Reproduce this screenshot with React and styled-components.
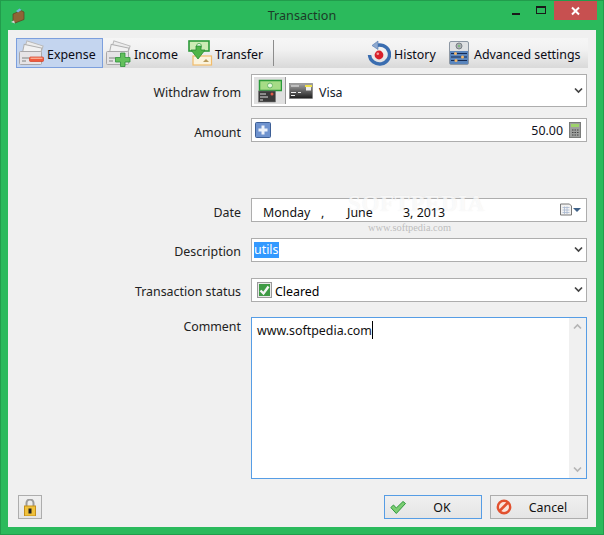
import React from 'react';
import styled, { createGlobalStyle } from 'styled-components';

const Global = createGlobalStyle`
  html, body { margin: 0; padding: 0; background: #2bb95c; }
  body { font-family: "Noto Sans", "Open Sans", "Liberation Sans", sans-serif; font-size: 12.4px; color: #000; }
`;

const Window = styled.div`
  width: 604px; height: 535px; box-sizing: border-box;
  background: #2bba5c; border: 1px solid #229c4c;
  display: flex; flex-direction: column; position: relative; overflow: hidden;
`;
const TitleBar = styled.div`
  height: 29px; flex: none; display: flex; align-items: center; justify-content: space-between; position: relative;
`;
const AppIcon = styled.div`display: flex; margin-left: 10px; margin-top: 1px;`;
const Title = styled.div`
  position: absolute; left: 0; right: 0; top: 6px; text-align: center; font-size: 12.6px; color: #1c3a28; line-height: 18px;
`;
const WinControls = styled.div`display: flex; align-items: flex-start; height: 29px; margin-top: 0; padding-right: 6px;`;
const WinBtn = styled.div`
  width: ${p => p.$w}px; height: 19px; display: flex; align-items: center; justify-content: center;
  background: ${p => p.$close ? '#c75050' : 'transparent'};
`;
const Client = styled.div`
  flex: 1; margin: 0 7px 7px; background: #f0f0f0; padding: 8px 8px 8px; display: flex; flex-direction: column; min-height: 0;
`;
const Toolbar = styled.div`
  height: 30px; flex: none; display: flex; align-items: stretch; background: linear-gradient(#f6f6f6, #f1f1f1 40%, #d9d9d9);
`;
const ToolBtn = styled.div`
  display: flex; align-items: center; gap: ${p => p.$gap ?? 3}px; box-sizing: border-box; width: ${p => p.$w}px; padding-left: ${p => p.$pl ?? 0}px;
  white-space: nowrap; color: #0a0a14;
  ${p => p.$active && 'background: #c4d5ef; border: 1px solid #7c9fdd;'}
`;
const ToolText = styled.span`padding-top: 2px;`;
const ToolSep = styled.div`width: 1px; margin: 2px 0 2px 2px; background: #8c8c8c;`;
const Spacer = styled.div`flex: 1;`;
const Form = styled.div`
  flex: 1; display: flex; flex-direction: column; margin-top: 6px; min-height: 0;
`;
const Row = styled.div`
  display: grid; grid-template-columns: 225px 336px; column-gap: 10px; flex: none; height: ${p => p.$h}px; margin-top: ${p => p.$mt ?? 0}px;
`;
const Label = styled.div`
  text-align: right; color: #222; line-height: 18px; padding-top: ${p => p.$pt ?? 5}px;
`;
const Field = styled.div`
  box-sizing: border-box; background: #fff; border: 1px solid #adadad;
  display: flex; align-items: center; position: relative; min-width: 0;
`;
const Chevron = styled.svg`position: absolute; right: 3px; top: 50%; margin-top: -4px;`;
const AccountTile = styled.div`
  width: 31px; height: 27px; margin-left: 2px; background: #e0e0e0; border-right: 1px solid #999; display: flex; align-items: center; justify-content: center;
`;
const CardWrap = styled.div`display: flex; margin-left: 3px;`;
const VisaText = styled.span`margin-left: 6px; color: #14202c; padding-top: 4px;`;
const PlusWrap = styled.div`display: flex; margin-left: 3px;`;
const AmountValue = styled.div`margin-left: auto; margin-right: 6px; color: #101020;`;
const CalcWrap = styled.div`display: flex; margin-right: 5px;`;
const DateText = styled.div`display: flex; margin-left: 11px; padding-top: 4px; position: relative; z-index: 1;`;
const DatePart = styled.span`width: ${p => p.$w}px; white-space: pre; color: #111; flex: none;`;
const DateIcon = styled.div`display: flex; margin-left: auto; margin-right: 5px;`;
const Selected = styled.span`background: #3399ff; color: #fff; margin-left: 2px; line-height: 16px; height: 16px; display: block; padding-right: 1px;`;
const CheckWrap = styled.div`display: flex; margin-left: 5px; margin-right: 3px;`;
const StatusText = styled.span`padding-top: 2px;`;
const Comment = styled.div`
  box-sizing: border-box; background: #fff; border: 1px solid #569de5; position: relative; padding: 3px 5px;
  line-height: 18px; color: #111;
`;
const Caret = styled.span`display: inline-block; width: 1px; height: 18px; background: #000; vertical-align: -4px;`;
const ScrollTrack = styled.div`
  position: absolute; right: 0; top: 0; bottom: 0; width: 17px; background: #f0f0f0; display: flex; flex-direction: column; justify-content: space-between; align-items: center; padding: 5px 0; box-sizing: border-box;
`;
const Footer = styled.div`
  display: flex; align-items: center; flex: none; height: 24px; padding-left: 2px;
`;
const Button = styled.div`
  box-sizing: border-box; width: ${p => p.$w ?? 98}px; height: 24px; margin-left: ${p => p.$ml ?? 0}px;
  border: 1px solid ${p => p.$focus ? '#569de5' : '#adadad'};
  background: linear-gradient(#f0f0f0, #e5e5e5); display: flex; align-items: center; position: relative;
  justify-content: ${p => p.$center ? 'center' : 'flex-start'}; color: #111;
`;
const BtnIcon = styled.div`display: flex; margin-left: 5px;`;
const BtnLabel = styled.span`flex: 1; text-align: center; padding-right: ${p => p.$pr ?? 0}px;`;
const WatermarkBig = styled.div`
  position: absolute; left: 347px; top: 190px; font-family: "Liberation Serif", serif; font-size: 23px; letter-spacing: 0.6px; font-weight: 700;
  color: rgba(255,255,255,.7); text-shadow: 0 0 1px rgba(205,205,205,.35); pointer-events: none; white-space: nowrap; line-height: 26px;
`;
const WatermarkSmall = styled.div`
  position: absolute; left: 367px; top: 220px; font-family: "Liberation Serif", serif; font-size: 10.4px; color: rgba(175,175,175,.8); pointer-events: none; white-space: nowrap; line-height: 14px;
`;

const ChevronIcon = () => (
  <Chevron width="9" height="7" viewBox="0 0 9 7"><path d="M1 1.500 4.500 5 8 1.500" fill="none" stroke="#444" strokeWidth="1.700" /></Chevron>
);

const Bills = () => (
  <g>
    <rect x="6" y="3" width="17" height="11" fill="#ececec" stroke="#b8b8b8" transform="rotate(18 14 8)" />
    <rect x="4" y="6" width="18" height="11" fill="#f2f2f2" stroke="#b0b0b0" transform="rotate(12 12 11)" />
    <rect x="0.500" y="11.500" width="22" height="13" rx="1" fill="#e6e4e6" stroke="#a9a7a9" />
    <path d="M3 18h7M3 21h4" stroke="#a2a2a2" strokeWidth="1.500" />
  </g>
);
const ExpenseIcon = () => (
  <svg width="26" height="27" viewBox="0 0 26 27" style={{ flex: 'none' }}>
    <Bills />
    <rect x="10.500" y="17" width="14" height="4.500" rx="1" fill="#ef5a3c" stroke="#d23c22" strokeWidth=".7" />
    <rect x="11.500" y="17.600" width="12" height="1.300" fill="#fbb39b" />
  </svg>
);
const IncomeIcon = () => (
  <svg width="26" height="27" viewBox="0 0 26 27" style={{ flex: 'none' }}>
    <Bills />
    <path d="M14.500 13h4.500v4.500h5v4.500h-5v4.500h-4.500v-4.500h-5v-4.500h5z" fill="#63c05c" stroke="#2f8f3a" strokeWidth=".8" />
  </svg>
);
const TransferIcon = () => (
  <svg width="25" height="26" viewBox="0 0 25 26" style={{ flex: 'none' }}>
    <rect x="1" y="1" width="20" height="10" fill="#cdebb5" stroke="#2c9a3a" strokeWidth="1.600" />
    <circle cx="11" cy="6" r="2.500" fill="#fff" stroke="#5bb05b" />
    <rect x="5" y="16" width="18.500" height="9" fill="#fbf3dd" stroke="#f2bc6b" strokeWidth="1.200" />
    <path d="M15 22l3-3 3 3z" fill="#b89a5a" />
    <path d="M3 10h5V6h5v4h4l-7 9z" fill="#4eb548" stroke="#2a8a34" strokeWidth=".8" />
  </svg>
);
const HistoryIcon = () => (
  <svg width="24" height="26" viewBox="0 0 24 26" style={{ flex: 'none' }}>
    <path d="M8 6A10 9.500 0 1 1 2.500 15" fill="none" stroke="#3a6db0" strokeWidth="3.400" />
    <path d="M11 1 5 5.500l6 4z" fill="#8fa9cf" stroke="#5078b0" strokeWidth=".6" />
    <circle cx="12" cy="15" r="4.400" fill="#d8202a" />
    <circle cx="10.800" cy="13.800" r="1.300" fill="#f6a0a0" />
  </svg>
);
const AdvancedIcon = () => (
  <svg width="20" height="24" viewBox="0 0 20 24" style={{ flex: 'none' }}>
    <rect x=".5" y=".5" width="19" height="23" rx="1.500" fill="#dfe1e3" stroke="#8d97a3" />
    <rect x="1" y="10" width="18" height="13" fill="#5b86bd" />
    <circle cx="10" cy="5" r="3" fill="#a9aeb0" stroke="#787f85" />
    <circle cx="10" cy="5" r="1" fill="#70c070" />
    <path d="M2 12.500h16M2 16h16M2 19.500h16" stroke="#152b55" strokeWidth="1.200" />
    <circle cx="6.500" cy="12.500" r="1.500" fill="#f3b86a" />
    <circle cx="13.500" cy="16" r="1.500" fill="#f3b86a" />
    <circle cx="7" cy="19.500" r="1.500" fill="#f3b86a" />
  </svg>
);
const CardIcon = () => (
  <svg width="24" height="16" viewBox="0 0 24 16" style={{ flex: 'none' }}>
    <defs>
      <linearGradient id="cardg" x1="0" x2="0" y1="0" y2="1">
        <stop offset="0" stopColor="#a6a6a6" /><stop offset="1" stopColor="#1d1d1d" />
      </linearGradient>
    </defs>
    <rect x=".5" y=".5" width="23" height="15" fill="url(#cardg)" stroke="#777" strokeWidth=".6" />
    <path d="M2 3h8M2 9.500h5M9 9.500h3M2 12.500h4" stroke="#eee" strokeWidth="1" />
    <rect x="16" y="2" width="7" height="2" fill="#efe04a" />
    <rect x="17" y="4" width="5" height="3.500" fill="#eee" />
  </svg>
);
const TileIcon = () => (
  <svg width="24" height="24" viewBox="0 0 24 24">
    <rect x="1.500" y="1.500" width="22" height="10" fill="#a6dc86" stroke="#2b9a3a" strokeWidth="1.500" />
    <circle cx="12" cy="6.500" r="2.500" fill="#e9f8df" stroke="#69b86a" />
    <rect x="0.500" y="12" width="17" height="11" fill="#3a3a3a" stroke="#777" strokeWidth=".6" />
    <path d="M2 15h6M2 18h8M2 21h3" stroke="#ddd" />
    <circle cx="14" cy="15" r="1.500" fill="#e05a4a" />
  </svg>
);
const PlusIcon = () => (
  <svg width="16" height="16" viewBox="0 0 16 16">
    <rect x=".5" y=".5" width="15" height="15" rx="1" fill="#6f93cf" stroke="#3d5f96" />
    <path d="M6.500 3.500h3v3h3v3h-3v3h-3v-3h-3v-3h3z" fill="#edf2fa" />
  </svg>
);
const CalcIcon = () => (
  <svg width="12" height="16" viewBox="0 0 12 16">
    <rect x=".5" y=".5" width="11" height="15" fill="#9d9f9d" stroke="#7a7c7a" />
    <rect x="2" y="2" width="8" height="3" fill="#9ed36b" />
    <path d="M3 8h1.500M5.500 8H7M8 8h1.500M3 10.500h1.500M5.500 10.500H7M8 10.500h1.500M3 13h1.500M5.500 13H7M8 13h1.500" stroke="#444" />
  </svg>
);
const DateDropIcon = () => (
  <svg width="21" height="14" viewBox="0 0 21 14">
    <path d="M.5 1h9l2 2v9H.5z" fill="#f2f2f2" stroke="#777" />
    <path d="M2.500 4.500h7M2.500 7h7M2.500 9.500h7M4.500 3.500v7.500M7 3.500v7.500" stroke="#a8b8cf" strokeWidth=".8" />
    <path d="M13 5h8l-4 4z" fill="#3e6187" />
  </svg>
);
const CheckIcon = () => (
  <svg width="15" height="16" viewBox="0 0 15 16">
    <rect x=".5" y=".5" width="14" height="15" fill="#e8e8e8" stroke="#9a9a9a" />
    <rect x="2" y="2" width="11" height="12" fill="#3f9a45" />
    <path d="M3.500 8.500 6.500 11.500 11.500 4.500" fill="none" stroke="#f5f5f5" strokeWidth="2.400" />
  </svg>
);
const OkIcon = () => (
  <svg width="16" height="15" viewBox="0 0 16 15">
    <path d="M0.800 7.500 3.500 5 6.300 8 13 1.500l2.500 2L6.300 13.500z" fill="#7ccd72" stroke="#2f9a3d" />
  </svg>
);
const CancelIcon = () => (
  <svg width="16" height="16" viewBox="0 0 16 16">
    <circle cx="8" cy="8" r="6.200" fill="#fbe4dc" stroke="#e2512f" strokeWidth="2.400" />
    <path d="M3.500 12 12 3.500" stroke="#e2512f" strokeWidth="2.600" />
  </svg>
);
const LockIcon = () => (
  <svg width="12" height="17" viewBox="0 0 12 17">
    <path d="M2.500 7V4a3.500 3.500 0 0 1 7 0v3" fill="none" stroke="#9c9c9c" strokeWidth="2" />
    <rect x=".5" y="7" width="11" height="10" fill="#f0c23c" stroke="#c58f1a" />
    <rect x="4.500" y="9.500" width="3" height="5" fill="#222" />
  </svg>
);
const WalletIcon = () => (
  <svg width="14" height="16" viewBox="0 0 14 16">
    <path d="M2 6 10 2.500l3 1.500v7.500L4 15 2 13z" fill="#8f6436" stroke="#5d3f1f" strokeWidth=".7" />
    <path d="M5 3 8.500 .5 10.500 2 7 4.500z" fill="#7ab2de" />
    <path d="M0 14l3-1.500 1 3z" fill="#d8d8d8" />
  </svg>
);

export default function App() {
  return (
    <Window>
      <Global />
      <TitleBar>
        <AppIcon><WalletIcon /></AppIcon>
        <Title>Transaction</Title>
        <WinControls>
          <WinBtn $w={24}>
            <svg width="10" height="10" viewBox="0 0 10 10"><rect x="1" y="7" width="8" height="2" fill="#1a1a1a" /></svg>
          </WinBtn>
          <WinBtn $w={26}>
            <svg width="12" height="10" viewBox="0 0 12 10"><rect x="1.500" y=".5" width="9" height="7" fill="none" stroke="#1a1a1a" /><rect x="1" y="0" width="10" height="2" fill="#1a1a1a" /></svg>
          </WinBtn>
          <WinBtn $w={43} $close>
            <svg width="10" height="10" viewBox="0 0 10 10"><path d="M1 1.500l7 7M8 1.500l-7 7" stroke="#fff" strokeWidth="2" /></svg>
          </WinBtn>
        </WinControls>
      </TitleBar>
      <Client>
        <Toolbar>
          <ToolBtn $active $w={87} $pl={2} $gap={2}><ExpenseIcon /><ToolText>Expense</ToolText></ToolBtn>
          <ToolBtn $w={81} $pl={3} $gap={2}><IncomeIcon /><ToolText>Income</ToolText></ToolBtn>
          <ToolBtn $w={87} $pl={4} $gap={2}><TransferIcon /><ToolText>Transfer</ToolText></ToolBtn>
          <ToolSep />
          <Spacer />
          <ToolBtn $w={83} $pl={1} $gap={3}><HistoryIcon /><ToolText>History</ToolText></ToolBtn>
          <ToolBtn $w={139} $gap={5}><AdvancedIcon /><ToolText>Advanced settings</ToolText></ToolBtn>
        </Toolbar>
        <Form>
          <Row $h={33}>
            <Label $pt={10}>Withdraw from</Label>
            <Field>
              <AccountTile><TileIcon /></AccountTile>
              <CardWrap><CardIcon /></CardWrap>
              <VisaText>Visa</VisaText>
              <ChevronIcon />
            </Field>
          </Row>
          <Row $h={24} $mt={11}>
            <Label $pt={6}>Amount</Label>
            <Field>
              <PlusWrap><PlusIcon /></PlusWrap>
              <AmountValue>50.00</AmountValue>
              <CalcWrap><CalcIcon /></CalcWrap>
            </Field>
          </Row>
          <Row $h={24} $mt={56}>
            <Label $pt={6}>Date</Label>
            <Field>
              <DateText>
                <DatePart $w={58}>Monday</DatePart>
                <DatePart $w={26}>,</DatePart>
                <DatePart $w={56}>June</DatePart>
                <DatePart $w={50}>3, 2013</DatePart>
              </DateText>
              <DateIcon><DateDropIcon /></DateIcon>
            </Field>
          </Row>
          <Row $h={24} $mt={16}>
            <Label>Description</Label>
            <Field>
              <Selected>utils</Selected>
              <ChevronIcon />
            </Field>
          </Row>
          <Row $h={24} $mt={16}>
            <Label>Transaction status</Label>
            <Field>
              <CheckWrap><CheckIcon /></CheckWrap>
              <StatusText>Cleared</StatusText>
              <ChevronIcon />
            </Field>
          </Row>
          <Row $h={162} $mt={15}>
            <Label $pt={1}>Comment</Label>
            <Comment>
              www.softpedia.com<Caret />
              <ScrollTrack>
                <svg width="9" height="7" viewBox="0 0 9 7"><path d="M1 5.500 4.500 2 8 5.500" fill="none" stroke="#b5b5b5" strokeWidth="1.700" /></svg>
                <svg width="9" height="7" viewBox="0 0 9 7"><path d="M1 1.500 4.500 5 8 1.500" fill="none" stroke="#b5b5b5" strokeWidth="1.700" /></svg>
              </ScrollTrack>
            </Comment>
          </Row>
        </Form>
        <Footer>
          <Button $w={24} $center><LockIcon /></Button>
          <Spacer />
          <Button $focus><BtnIcon><OkIcon /></BtnIcon><BtnLabel $pr={3}>OK</BtnLabel></Button>
          <Button $ml={8}><BtnIcon><CancelIcon /></BtnIcon><BtnLabel $pr={3}>Cancel</BtnLabel></Button>
        </Footer>
      </Client>
      <WatermarkBig>SOFTPEDIA</WatermarkBig>
      <WatermarkSmall>www.softpedia.com</WatermarkSmall>
    </Window>
  );
}
